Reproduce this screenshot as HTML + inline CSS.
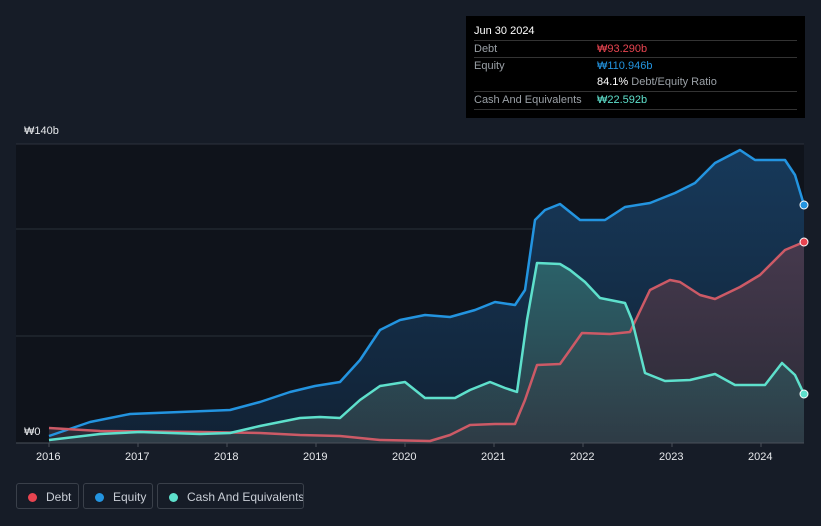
<!DOCTYPE html>
<html><head><meta charset="utf-8"><style>
body{margin:0;width:821px;height:526px;background:#161c27;font-family:"Liberation Sans",sans-serif;overflow:hidden;position:relative}
.tip{position:absolute;left:466px;top:16px;width:339px;height:102px;background:#000;color:#fff;font-size:11px}
.tip .r{position:absolute;left:8px;right:8px;height:17px;border-top:1px solid #333;line-height:17px;color:#9aa0a6}
.tip .v{position:absolute;left:123px}
.leg{position:absolute;top:483px;height:26px;border:1px solid #3a404a;border-radius:3px;color:#c9ced6;font-size:12px;line-height:26px;box-sizing:border-box;white-space:nowrap;overflow:hidden}
.leg i{display:inline-block;width:9px;height:9px;border-radius:50%;margin:0 9px 0 11px;vertical-align:-1px}
.ax{position:absolute;color:#e6e8eb;font-size:11px}
</style></head><body>
<svg width="821" height="526" style="position:absolute;left:0;top:0">
<defs>
<linearGradient id="ge" x1="0" y1="0" x2="0" y2="1"><stop offset="0" stop-color="#17395a"/><stop offset="1" stop-color="#112235"/></linearGradient>
<linearGradient id="gd" x1="0" y1="0" x2="0" y2="1"><stop offset="0" stop-color="#46394d"/><stop offset="1" stop-color="#2a2a36"/></linearGradient>
<linearGradient id="gc" x1="0" y1="0" x2="0" y2="1"><stop offset="0" stop-color="#2f6a6e"/><stop offset="1" stop-color="#2f3e48"/></linearGradient>
</defs>
<rect x="16" y="144" width="788" height="299" fill="#0f131b"/>
<line x1="16" y1="144" x2="804" y2="144" stroke="#2c323c"/>
<line x1="16" y1="229" x2="804" y2="229" stroke="#2a303a"/>
<line x1="16" y1="336" x2="804" y2="336" stroke="#2a303a"/>
<polygon fill="url(#ge)" points="49,443 49,436 90,422 130,414 180,412 230,410 260,402 290,392 315,386 340,382 360,360 380,330 400,320 425,315 450,317 475,310 495,302 515,305 525,290 535,220 545,210 560,204 570,212 580,220 605,220 625,207 650,203 675,193 695,183 715,163 740,150 755,160 785,160 795,175 804,205 804,443"/>
<polygon fill="url(#gd)" points="49,443 49,428 100,431 200,432 260,433 300,435 340,436 380,440 430,441 450,435 470,425 495,424 515,424 525,400 537,365 560,364 570,350 582,333 610,334 630,332 650,290 670,280 680,282 700,295 715,299 740,287 760,275 785,250 804,242 804,443"/>
<polygon fill="url(#gc)" opacity="0.85" points="49,443 49,440 100,434 140,432 200,434 230,433 260,426 300,418 320,417 340,418 360,400 380,386 405,382 425,398 455,398 470,390 490,382 505,388 517,392 527,320 537,263 560,264 570,270 585,282 600,298 625,303 632,320 645,373 665,381 690,380 715,374 735,385 765,385 782,363 795,375 804,394 804,443"/>
<g fill="none" stroke-width="2.5" stroke-linejoin="round">
<polyline stroke="#2394e0" points="49,436 90,422 130,414 180,412 230,410 260,402 290,392 315,386 340,382 360,360 380,330 400,320 425,315 450,317 475,310 495,302 515,305 525,290 535,220 545,210 560,204 570,212 580,220 605,220 625,207 650,203 675,193 695,183 715,163 740,150 755,160 785,160 795,175 804,205"/>
<polyline stroke="#cc5a66" points="49,428 100,431 200,432 260,433 300,435 340,436 380,440 430,441 450,435 470,425 495,424 515,424 525,400 537,365 560,364 570,350 582,333 610,334 630,332 650,290 670,280 680,282 700,295 715,299 740,287 760,275 785,250 804,242"/>
<polyline stroke="#5ee0cc" points="49,440 100,434 140,432 200,434 230,433 260,426 300,418 320,417 340,418 360,400 380,386 405,382 425,398 455,398 470,390 490,382 505,388 517,392 527,320 537,263 560,264 570,270 585,282 600,298 625,303 632,320 645,373 665,381 690,380 715,374 735,385 765,385 782,363 795,375 804,394"/>
</g>
<circle cx="804" cy="205" r="4" fill="#2394e0" stroke="#fff"/>
<circle cx="804" cy="242" r="4" fill="#e84450" stroke="#fff"/>
<circle cx="804" cy="394" r="4" fill="#5ee0cc" stroke="#fff"/>
<line x1="16" y1="443" x2="804" y2="443" stroke="#4a505a"/>
<g stroke="#4a505a"><line x1="49" y1="443" x2="49" y2="447"/><line x1="138" y1="443" x2="138" y2="447"/><line x1="227" y1="443" x2="227" y2="447"/><line x1="316" y1="443" x2="316" y2="447"/><line x1="405" y1="443" x2="405" y2="447"/><line x1="494" y1="443" x2="494" y2="447"/><line x1="583" y1="443" x2="583" y2="447"/><line x1="672" y1="443" x2="672" y2="447"/><line x1="761" y1="443" x2="761" y2="447"/></g>
</svg>
<div class="ax" style="left:24px;top:125px">₩140b</div>
<div class="ax" style="left:24px;top:426px">₩0</div>
<div class="ax" style="left:36px;top:451px">2016</div>
<div class="ax" style="left:125px;top:451px">2017</div>
<div class="ax" style="left:214px;top:451px">2018</div>
<div class="ax" style="left:303px;top:451px">2019</div>
<div class="ax" style="left:392px;top:451px">2020</div>
<div class="ax" style="left:481px;top:451px">2021</div>
<div class="ax" style="left:570px;top:451px">2022</div>
<div class="ax" style="left:659px;top:451px">2023</div>
<div class="ax" style="left:748px;top:451px">2024</div>
<div class="tip">
<div style="position:absolute;left:8px;top:9px;font-size:11px">Jun 30 2024</div>
<div class="r" style="top:24px">Debt<span class="v" style="color:#e84450">₩93.290b</span></div>
<div class="r" style="top:41px">Equity<span class="v" style="color:#2394e0">₩110.946b</span></div>
<div class="r" style="top:58px;border-top:none"><span class="v"><b style="color:#fff;font-weight:normal">84.1%</b> Debt/Equity Ratio</span></div>
<div class="r" style="top:75px;border-bottom:1px solid #333">Cash And Equivalents<span class="v" style="color:#5ee0cc">₩22.592b</span></div>
</div>
<div class="leg" style="left:16px;width:63px"><i style="background:#e84450"></i>Debt</div>
<div class="leg" style="left:83px;width:70px"><i style="background:#2394e0"></i>Equity</div>
<div class="leg" style="left:157px;width:147px"><i style="background:#5ee0cc"></i>Cash And Equivalents</div>
</body></html>
